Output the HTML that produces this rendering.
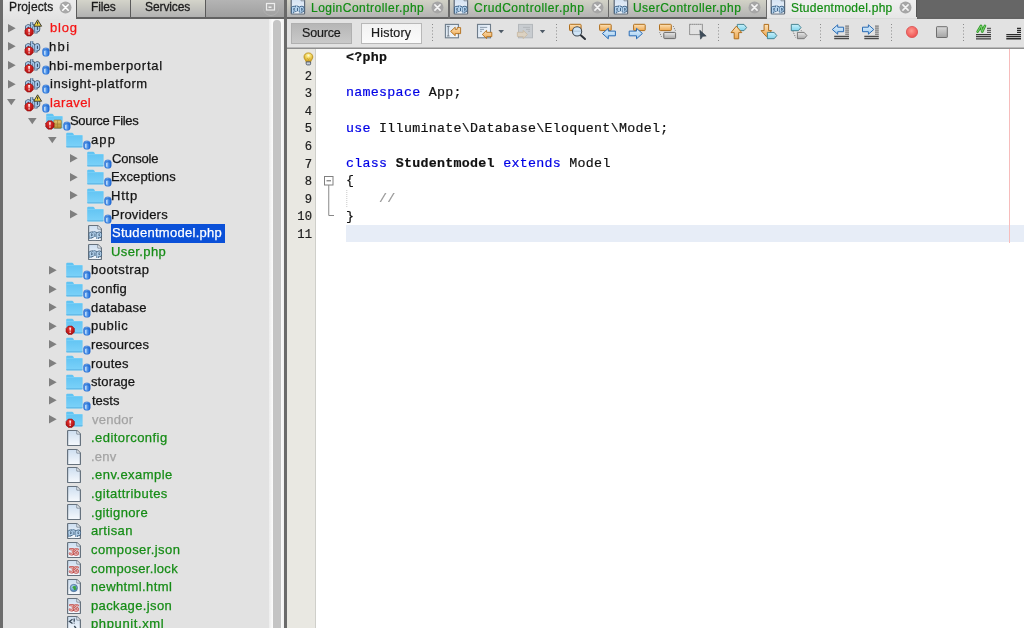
<!DOCTYPE html>
<html><head><meta charset="utf-8"><style>
html,body{margin:0;padding:0;width:1024px;height:628px;overflow:hidden;background:#e2e2e2;position:relative}
.t{position:absolute;white-space:pre;line-height:1;transform-origin:0 0;will-change:transform;font-family:"Liberation Sans",sans-serif}
.ic{position:absolute;overflow:visible;will-change:transform}
.ln{left:291px;width:21px;text-align:right;font-family:"Liberation Mono",monospace;font-size:12.2px;color:#1e1e1e;-webkit-text-stroke:0.2px #1e1e1e}
.code{position:absolute;white-space:pre;will-change:transform;transform-origin:0 0;font-family:"Liberation Mono",monospace;line-height:1;color:#111;-webkit-text-stroke:0.2px currentColor}
</style></head><body>
<svg width="0" height="0" style="position:absolute">
<defs>
<linearGradient id="gFold" x1="0" y1="0" x2="0" y2="1"><stop offset="0" stop-color="#5ec2f2"/><stop offset="1" stop-color="#7cd2f9"/></linearGradient>
<linearGradient id="gFile" x1="0" y1="0" x2="0" y2="1"><stop offset="0" stop-color="#cddef0"/><stop offset="1" stop-color="#f6f9fd"/></linearGradient>
<radialGradient id="gRed" cx="0.45" cy="0.35" r="0.7"><stop offset="0" stop-color="#ea3434"/><stop offset="1" stop-color="#a80c0c"/></radialGradient>
<linearGradient id="gBlue" x1="0" y1="0" x2="1" y2="0"><stop offset="0" stop-color="#2a78e0"/><stop offset="0.4" stop-color="#6aaaf0"/><stop offset="1" stop-color="#1a66d6"/></linearGradient>
<linearGradient id="gGold" x1="0" y1="0" x2="0" y2="1"><stop offset="0" stop-color="#e8c870"/><stop offset="1" stop-color="#b08a30"/></linearGradient>
<g id="redb"><path d="M-1.8 -4.2H1.8L4.2 -1.8V1.8L1.8 4.2H-1.8L-4.2 1.8V-1.8Z" fill="url(#gRed)" stroke="#8a0c0c" stroke-width="0.5" stroke-linejoin="round"/><path d="M-1 -2.8H1L0.5 0.6H-0.5Z" fill="#fff" opacity="0.9"/><rect x="-0.8" y="1.4" width="1.6" height="1.2" fill="#fff" opacity="0.85"/></g>
<g id="badge"><rect x="17.6" y="9.9" width="6.6" height="8.4" rx="3" ry="2.6" fill="url(#gBlue)" stroke="#1e62c8" stroke-width="0.5"/><path d="M19.8 12.6V16.8" stroke="#e8f2ff" stroke-width="1.2" opacity="0.85"/><path d="M19 12.2Q21 11.2 23.2 12.2" fill="none" stroke="#1a5cc0" stroke-width="0.7"/></g>
<g id="phpd"><path d="M1.9 6.6V14.6M6.75 3.2V12.4M6.75 8Q6.75 6.6 7.8 6.6Q8.75 6.6 8.75 8V12.4M10.9 6.6V14.6"/><ellipse cx="3.35" cy="9.3" rx="1.5" ry="2.6"/><ellipse cx="12.35" cy="9.3" rx="1.45" ry="2.6"/></g>
<g id="phpc"><path d="M2.6 8.1V14.2M6.4 6.4V12.2M6.4 9.2Q6.4 8.1 7.45 8.1Q8.5 8.1 8.5 9.2V12.2M10.2 8.1V14.2"/><ellipse cx="4.15" cy="10.15" rx="1.55" ry="2.05"/><ellipse cx="11.75" cy="10.15" rx="1.55" ry="2.05"/></g><g id="phpletters"><use href="#phpd" fill="none" stroke="#38506c" stroke-width="3"/><use href="#phpd" fill="none" stroke="#a8caec" stroke-width="1.4"/></g>
<g id="proj"><use href="#phpletters"/><use href="#redb" transform="translate(4.1 12.9)"/></g>
<g id="projw"><use href="#phpletters"/><use href="#redb" transform="translate(4.1 12.9)"/><path d="M12.6 0.8 L16.6 7.2 L8.7 7.2Z" fill="#f2d840" stroke="#2a2a2a" stroke-width="0.9" stroke-linejoin="round"/><rect x="12.1" y="2.8" width="1" height="2.6" fill="#333"/></g>
<g id="folderbody"><path d="M0.2 2.8 Q0.2 1.7 1.3 1.7 H6 Q6.8 1.7 7.3 2.5 L8 3.9 H15.6 Q16.6 3.9 16.6 4.9 V15.6 Q16.6 16.4 15.8 16.4 H1 Q0.2 16.4 0.2 15.6Z" fill="url(#gFold)"/><path d="M0.3 15.8 H16.5" stroke="#58b0e0" stroke-width="0.9"/><path d="M0.4 4.6 H16.4" stroke="#88d8fa" stroke-width="0.8" opacity="0.7"/></g>
<g id="folder"><use href="#folderbody"/></g>
<g id="folderr"><use href="#folderbody"/><use href="#redb" transform="translate(4.2 13.2)"/></g>
<g id="src"><use href="#folderbody"/><rect x="7.8" y="8.1" width="7.5" height="8.1" rx="0.8" fill="url(#gGold)" stroke="#8a6a20" stroke-width="0.6"/><path d="M11.55 8.4V16M8.2 12.1H15" stroke="#9a7a30" stroke-width="0.6"/><use href="#redb" transform="translate(3.9 13)"/></g>
<g id="filebase"><path d="M2.2 1.5H10.8L14.4 5.1V15.9Q14.4 16.5 13.8 16.5H2.2Q1.6 16.5 1.6 15.9V2.1Q1.6 1.5 2.2 1.5Z" fill="url(#gFile)" stroke="#66727e" stroke-width="1.2"/><path d="M10.8 1.8V5.1H14.1" fill="#f4f8fc" stroke="#7d8894" stroke-width="0.9"/></g>
<g id="blank"><use href="#filebase"/></g>
<g id="phpsmall" transform="translate(0.5 0.7)"><use href="#phpc" fill="none" stroke="#44627f" stroke-width="2.6"/><use href="#phpc" fill="none" stroke="#b8d6f0" stroke-width="1.1"/></g>
<g id="php"><use href="#filebase"/><use href="#phpsmall"/><path d="M4.5 15.6H9" stroke="#e4ecf4" stroke-width="0.8"/></g>
<path id="jsp" d="M4.2 8.2H6.9V11.9Q6.9 13.5 5.3 13.5Q4.1 13.5 3.8 12.5M11.8 8.4Q11.2 8 10.2 8Q8.6 8 8.6 9.5Q8.6 10.7 10.2 10.8Q11.9 10.9 11.9 12.2Q11.9 13.6 10.1 13.6Q9 13.6 8.4 13.1"/><g id="js"><use href="#filebase"/><g fill="none" stroke-linecap="round" stroke-linejoin="round"><use href="#jsp" stroke="#bc4a4a" stroke-width="2.2"/><use href="#jsp" stroke="#f8d0c8" stroke-width="0.8"/></g></g>
<radialGradient id="gGlobe" cx="0.4" cy="0.35" r="0.7"><stop offset="0" stop-color="#b8dcf4"/><stop offset="1" stop-color="#3e78b8"/></radialGradient><g id="html"><use href="#filebase"/><circle cx="7.8" cy="10" r="3.7" fill="url(#gGlobe)" stroke="#4a6888" stroke-width="0.6"/><path d="M6.2 9.2Q7.8 7.4 10.2 8.6L9.6 10.2L10.8 10.6Q9.8 12.6 7.6 12.2Q8.6 11 7.4 10.4Z" fill="#3aa43a"/></g>
<g id="xml"><use href="#filebase"/><path d="M6.5 4.3 L3.4 6.4 L6.5 8.5" fill="none" stroke="#384858" stroke-width="1.3"/><path d="M8.2 3.6V6.8M8.2 7.8V8.6" stroke="#384858" stroke-width="1.3"/><path d="M8.3 11 L10.5 14" stroke="#384858" stroke-width="1.3"/></g>
<g id="tabphp"><path d="M2 -2 H11 L14.6 1.6 V14.2 Q14.6 15 13.8 15 H2 Q1.2 15 1.2 14.2 V-2Z" fill="url(#gFile)" stroke="#5e6a78" stroke-width="1.2"/><path d="M11 -1 V1.8 H14.4" fill="#f4f8fc" stroke="#7d8894" stroke-width="0.9"/><g><use href="#phpc" fill="none" stroke="#3f6488" stroke-width="2.6"/><use href="#phpc" fill="none" stroke="#b8d6f0" stroke-width="1.1"/></g><path d="M4.5 13.6H9.5" stroke="#e4ecf4" stroke-width="0.9"/></g>
</defs></svg>

<div style="position:absolute;left:0px;top:0px;width:3px;height:628px;background:#6c6c6c"></div><div style="position:absolute;left:3px;top:0px;width:281px;height:17px;background:linear-gradient(#b4b4b4,#9f9f9f)"></div><div style="position:absolute;left:3px;top:17px;width:281px;height:2px;background:#626262"></div><div style="position:absolute;left:3px;top:0px;width:73px;height:19px;background:linear-gradient(#ececec,#e3e3e3)"></div><div style="position:absolute;left:76px;top:0px;width:54px;height:17px;background:linear-gradient(#d4d4ca,#b2b2b2);border-left:1px solid #5a5a5a;box-sizing:border-box"></div><div style="position:absolute;left:130px;top:0px;width:76px;height:17px;background:linear-gradient(#d4d4ca,#b2b2b2);border-left:1px solid #5a5a5a;border-right:1px solid #5a5a5a;box-sizing:border-box"></div><div class="t" style="left:8.84px;top:1.24px;font-size:12px;color:#1c1c1c;font-weight:normal;letter-spacing:0.137px;font-family:'Liberation Sans', sans-serif;-webkit-text-stroke:0.3px #1c1c1c">Projects</div><div class="t" style="left:90.84px;top:1.44px;font-size:12px;color:#1c1c1c;font-weight:normal;letter-spacing:-0.160px;font-family:'Liberation Sans', sans-serif;-webkit-text-stroke:0.3px #1c1c1c">Files</div><div class="t" style="left:144.96px;top:1.44px;font-size:12px;color:#1c1c1c;font-weight:normal;letter-spacing:-0.094px;font-family:'Liberation Sans', sans-serif;-webkit-text-stroke:0.3px #1c1c1c">Services</div><svg style="position:absolute;left:59px;top:1px;" width="13" height="13" viewBox="0 0 13 13"><circle cx="6.5" cy="6.5" r="6" fill="#a9a9a9"/><path d="M3.8 3.8L9.2 9.2M9.2 3.8L3.8 9.2" stroke="#fff" stroke-width="1.6" stroke-linecap="round"/></svg><svg style="position:absolute;left:262px;top:-1px;" width="18" height="18" viewBox="0 0 18 18"><circle cx="9" cy="8.5" r="8" fill="none" stroke="#b0b0b0" stroke-width="1"/><rect x="4.5" y="4.5" width="8" height="6.5" fill="none" stroke="#ededed" stroke-width="1.2"/><rect x="6.5" y="7.5" width="3" height="1.5" fill="#ededed"/></svg><div style="position:absolute;left:3px;top:19px;width:266px;height:609px;background:#e2e2e2"></div><div style="position:absolute;left:269px;top:19px;width:15px;height:609px;background:linear-gradient(90deg,#ededed,#fbfbfb 22%,#f6f6f6 50%,#fbfbfb 80%,#f0f0f0)"></div><div style="position:absolute;left:273px;top:20px;width:8px;height:608px;background:#c4c4c4;border-radius:4px 4px 0 0"></div><div style="position:absolute;left:284px;top:0px;width:3px;height:628px;background:#6a6a6a"></div><svg style="position:absolute;left:7.6px;top:23.700000000000003px;" width="9" height="10" viewBox="0 0 9 10"><path d="M0 0L7.7 4.3L0 8.6Z" fill="#7f7f7f"/></svg><svg class="ic" style="left:24.90px;top:19.10px" width="26" height="19" viewBox="0 0 26 19"><use href="#projw"/></svg><div class="t" style="left:49.55px;top:21.30px;font-size:13px;color:#f51414;font-weight:normal;letter-spacing:0.840px;font-family:'Liberation Sans', sans-serif;-webkit-text-stroke:0.25px #f51414">blog</div><svg style="position:absolute;left:7.6px;top:42.330000000000005px;" width="9" height="10" viewBox="0 0 9 10"><path d="M0 0L7.7 4.3L0 8.6Z" fill="#7f7f7f"/></svg><svg class="ic" style="left:24.90px;top:37.73px" width="26" height="19" viewBox="0 0 26 19"><use href="#proj"/><use href="#badge"/></svg><div class="t" style="left:49.49px;top:39.93px;font-size:13px;color:#151515;font-weight:normal;letter-spacing:1.383px;font-family:'Liberation Sans', sans-serif;-webkit-text-stroke:0.25px #151515">hbi</div><svg style="position:absolute;left:7.6px;top:60.96px;" width="9" height="10" viewBox="0 0 9 10"><path d="M0 0L7.7 4.3L0 8.6Z" fill="#7f7f7f"/></svg><svg class="ic" style="left:24.90px;top:56.36px" width="26" height="19" viewBox="0 0 26 19"><use href="#proj"/><use href="#badge"/></svg><div class="t" style="left:49.49px;top:58.56px;font-size:13px;color:#151515;font-weight:normal;letter-spacing:0.753px;font-family:'Liberation Sans', sans-serif;-webkit-text-stroke:0.25px #151515">hbi-memberportal</div><svg style="position:absolute;left:7.6px;top:79.59px;" width="9" height="10" viewBox="0 0 9 10"><path d="M0 0L7.7 4.3L0 8.6Z" fill="#7f7f7f"/></svg><svg class="ic" style="left:24.90px;top:74.99px" width="26" height="19" viewBox="0 0 26 19"><use href="#proj"/><use href="#badge"/></svg><div class="t" style="left:49.55px;top:77.19px;font-size:13px;color:#151515;font-weight:normal;letter-spacing:0.551px;font-family:'Liberation Sans', sans-serif;-webkit-text-stroke:0.25px #151515">insight-platform</div><svg style="position:absolute;left:7.0px;top:99.42px;" width="10" height="7" viewBox="0 0 10 7"><path d="M0 0L8.6 0L4.3 6.2Z" fill="#7f7f7f"/></svg><svg class="ic" style="left:24.90px;top:93.62px" width="26" height="19" viewBox="0 0 26 19"><use href="#projw"/><use href="#badge"/></svg><div class="t" style="left:49.55px;top:95.82px;font-size:13px;color:#f51414;font-weight:normal;letter-spacing:0.401px;font-family:'Liberation Sans', sans-serif;-webkit-text-stroke:0.25px #f51414">laravel</div><svg style="position:absolute;left:27.65px;top:118.05px;" width="10" height="7" viewBox="0 0 10 7"><path d="M0 0L8.6 0L4.3 6.2Z" fill="#7f7f7f"/></svg><svg class="ic" style="left:45.55px;top:112.25px" width="26" height="19" viewBox="0 0 26 19"><use href="#src"/><use href="#badge"/></svg><div class="t" style="left:70.47px;top:114.45px;font-size:13px;color:#151515;font-weight:normal;letter-spacing:-0.317px;font-family:'Liberation Sans', sans-serif;-webkit-text-stroke:0.25px #151515">Source Files</div><svg style="position:absolute;left:48.3px;top:136.68px;" width="10" height="7" viewBox="0 0 10 7"><path d="M0 0L8.6 0L4.3 6.2Z" fill="#7f7f7f"/></svg><svg class="ic" style="left:66.20px;top:130.88px" width="26" height="19" viewBox="0 0 26 19"><use href="#folder"/><use href="#badge"/></svg><div class="t" style="left:91.18px;top:133.08px;font-size:13px;color:#151515;font-weight:normal;letter-spacing:1.098px;font-family:'Liberation Sans', sans-serif;-webkit-text-stroke:0.25px #151515">app</div><svg style="position:absolute;left:69.55px;top:154.10999999999999px;" width="9" height="10" viewBox="0 0 9 10"><path d="M0 0L7.7 4.3L0 8.6Z" fill="#7f7f7f"/></svg><svg class="ic" style="left:86.85px;top:149.51px" width="26" height="19" viewBox="0 0 26 19"><use href="#folder"/><use href="#badge"/></svg><div class="t" style="left:111.70px;top:151.71px;font-size:13px;color:#151515;font-weight:normal;letter-spacing:-0.204px;font-family:'Liberation Sans', sans-serif;-webkit-text-stroke:0.25px #151515">Console</div><svg style="position:absolute;left:69.55px;top:172.73999999999998px;" width="9" height="10" viewBox="0 0 9 10"><path d="M0 0L7.7 4.3L0 8.6Z" fill="#7f7f7f"/></svg><svg class="ic" style="left:86.85px;top:168.14px" width="26" height="19" viewBox="0 0 26 19"><use href="#folder"/><use href="#badge"/></svg><div class="t" style="left:111.31px;top:170.34px;font-size:13px;color:#151515;font-weight:normal;letter-spacing:0.119px;font-family:'Liberation Sans', sans-serif;-webkit-text-stroke:0.25px #151515">Exceptions</div><svg style="position:absolute;left:69.55px;top:191.36999999999998px;" width="9" height="10" viewBox="0 0 9 10"><path d="M0 0L7.7 4.3L0 8.6Z" fill="#7f7f7f"/></svg><svg class="ic" style="left:86.85px;top:186.77px" width="26" height="19" viewBox="0 0 26 19"><use href="#folder"/><use href="#badge"/></svg><div class="t" style="left:111.31px;top:188.97px;font-size:13px;color:#151515;font-weight:normal;letter-spacing:0.785px;font-family:'Liberation Sans', sans-serif;-webkit-text-stroke:0.25px #151515">Http</div><svg style="position:absolute;left:69.55px;top:209.99999999999997px;" width="9" height="10" viewBox="0 0 9 10"><path d="M0 0L7.7 4.3L0 8.6Z" fill="#7f7f7f"/></svg><svg class="ic" style="left:86.85px;top:205.40px" width="26" height="19" viewBox="0 0 26 19"><use href="#folder"/><use href="#badge"/></svg><div class="t" style="left:111.31px;top:207.60px;font-size:13px;color:#151515;font-weight:normal;letter-spacing:0.215px;font-family:'Liberation Sans', sans-serif;-webkit-text-stroke:0.25px #151515">Providers</div><div style="position:absolute;left:111px;top:224px;width:114px;height:18.5px;background:#0a50d8"></div><svg class="ic" style="left:86.85px;top:224.03px" width="26" height="19" viewBox="0 0 26 19"><use href="#php"/></svg><div class="t" style="left:111.77px;top:226.23px;font-size:13px;color:#ffffff;font-weight:normal;letter-spacing:0.284px;font-family:'Liberation Sans', sans-serif;-webkit-text-stroke:0.25px #ffffff">Studentmodel.php</div><svg class="ic" style="left:86.85px;top:242.66px" width="26" height="19" viewBox="0 0 26 19"><use href="#php"/></svg><div class="t" style="left:111.38px;top:244.86px;font-size:13px;color:#168c16;font-weight:normal;letter-spacing:0.392px;font-family:'Liberation Sans', sans-serif;-webkit-text-stroke:0.25px #168c16">User.php</div><svg style="position:absolute;left:48.9px;top:265.89000000000004px;" width="9" height="10" viewBox="0 0 9 10"><path d="M0 0L7.7 4.3L0 8.6Z" fill="#7f7f7f"/></svg><svg class="ic" style="left:66.20px;top:261.29px" width="26" height="19" viewBox="0 0 26 19"><use href="#folder"/><use href="#badge"/></svg><div class="t" style="left:90.85px;top:263.49px;font-size:13px;color:#151515;font-weight:normal;letter-spacing:0.469px;font-family:'Liberation Sans', sans-serif;-webkit-text-stroke:0.25px #151515">bootstrap</div><svg style="position:absolute;left:48.9px;top:284.52000000000004px;" width="9" height="10" viewBox="0 0 9 10"><path d="M0 0L7.7 4.3L0 8.6Z" fill="#7f7f7f"/></svg><svg class="ic" style="left:66.20px;top:279.92px" width="26" height="19" viewBox="0 0 26 19"><use href="#folder"/><use href="#badge"/></svg><div class="t" style="left:91.18px;top:282.12px;font-size:13px;color:#151515;font-weight:normal;letter-spacing:0.224px;font-family:'Liberation Sans', sans-serif;-webkit-text-stroke:0.25px #151515">config</div><svg style="position:absolute;left:48.9px;top:303.15000000000003px;" width="9" height="10" viewBox="0 0 9 10"><path d="M0 0L7.7 4.3L0 8.6Z" fill="#7f7f7f"/></svg><svg class="ic" style="left:66.20px;top:298.55px" width="26" height="19" viewBox="0 0 26 19"><use href="#folder"/><use href="#badge"/></svg><div class="t" style="left:91.18px;top:300.75px;font-size:13px;color:#151515;font-weight:normal;letter-spacing:0.287px;font-family:'Liberation Sans', sans-serif;-webkit-text-stroke:0.25px #151515">database</div><svg style="position:absolute;left:48.9px;top:321.78000000000003px;" width="9" height="10" viewBox="0 0 9 10"><path d="M0 0L7.7 4.3L0 8.6Z" fill="#7f7f7f"/></svg><svg class="ic" style="left:66.20px;top:317.18px" width="26" height="19" viewBox="0 0 26 19"><use href="#folderr"/><use href="#badge"/></svg><div class="t" style="left:90.85px;top:319.38px;font-size:13px;color:#151515;font-weight:normal;letter-spacing:0.535px;font-family:'Liberation Sans', sans-serif;-webkit-text-stroke:0.25px #151515">public</div><svg style="position:absolute;left:48.9px;top:340.41px;" width="9" height="10" viewBox="0 0 9 10"><path d="M0 0L7.7 4.3L0 8.6Z" fill="#7f7f7f"/></svg><svg class="ic" style="left:66.20px;top:335.81px" width="26" height="19" viewBox="0 0 26 19"><use href="#folder"/><use href="#badge"/></svg><div class="t" style="left:90.85px;top:338.01px;font-size:13px;color:#151515;font-weight:normal;letter-spacing:0.104px;font-family:'Liberation Sans', sans-serif;-webkit-text-stroke:0.25px #151515">resources</div><svg style="position:absolute;left:48.9px;top:359.04px;" width="9" height="10" viewBox="0 0 9 10"><path d="M0 0L7.7 4.3L0 8.6Z" fill="#7f7f7f"/></svg><svg class="ic" style="left:66.20px;top:354.44px" width="26" height="19" viewBox="0 0 26 19"><use href="#folder"/><use href="#badge"/></svg><div class="t" style="left:90.85px;top:356.64px;font-size:13px;color:#151515;font-weight:normal;letter-spacing:0.292px;font-family:'Liberation Sans', sans-serif;-webkit-text-stroke:0.25px #151515">routes</div><svg style="position:absolute;left:48.9px;top:377.67px;" width="9" height="10" viewBox="0 0 9 10"><path d="M0 0L7.7 4.3L0 8.6Z" fill="#7f7f7f"/></svg><svg class="ic" style="left:66.20px;top:373.07px" width="26" height="19" viewBox="0 0 26 19"><use href="#folder"/><use href="#badge"/></svg><div class="t" style="left:91.31px;top:375.27px;font-size:13px;color:#151515;font-weight:normal;letter-spacing:0.120px;font-family:'Liberation Sans', sans-serif;-webkit-text-stroke:0.25px #151515">storage</div><svg style="position:absolute;left:48.9px;top:396.3px;" width="9" height="10" viewBox="0 0 9 10"><path d="M0 0L7.7 4.3L0 8.6Z" fill="#7f7f7f"/></svg><svg class="ic" style="left:66.20px;top:391.70px" width="26" height="19" viewBox="0 0 26 19"><use href="#folder"/><use href="#badge"/></svg><div class="t" style="left:91.50px;top:393.90px;font-size:13px;color:#151515;font-weight:normal;letter-spacing:0.005px;font-family:'Liberation Sans', sans-serif;-webkit-text-stroke:0.25px #151515">tests</div><svg style="position:absolute;left:48.9px;top:414.93px;" width="9" height="10" viewBox="0 0 9 10"><path d="M0 0L7.7 4.3L0 8.6Z" fill="#7f7f7f"/></svg><svg class="ic" style="left:66.20px;top:410.33px" width="26" height="19" viewBox="0 0 26 19"><use href="#folderr"/></svg><div class="t" style="left:91.63px;top:412.53px;font-size:13px;color:#a3a3a3;font-weight:normal;letter-spacing:0.289px;font-family:'Liberation Sans', sans-serif;-webkit-text-stroke:0.25px #a3a3a3">vendor</div><svg class="ic" style="left:66.20px;top:428.96px" width="26" height="19" viewBox="0 0 26 19"><use href="#blank"/></svg><div class="t" style="left:90.53px;top:431.16px;font-size:13px;color:#168c16;font-weight:normal;letter-spacing:0.444px;font-family:'Liberation Sans', sans-serif;-webkit-text-stroke:0.25px #168c16">.editorconfig</div><svg class="ic" style="left:66.20px;top:447.59px" width="26" height="19" viewBox="0 0 26 19"><use href="#blank"/></svg><div class="t" style="left:90.53px;top:449.79px;font-size:13px;color:#a3a3a3;font-weight:normal;letter-spacing:0.255px;font-family:'Liberation Sans', sans-serif;-webkit-text-stroke:0.25px #a3a3a3">.env</div><svg class="ic" style="left:66.20px;top:466.22px" width="26" height="19" viewBox="0 0 26 19"><use href="#blank"/></svg><div class="t" style="left:90.53px;top:468.42px;font-size:13px;color:#168c16;font-weight:normal;letter-spacing:0.444px;font-family:'Liberation Sans', sans-serif;-webkit-text-stroke:0.25px #168c16">.env.example</div><svg class="ic" style="left:66.20px;top:484.85px" width="26" height="19" viewBox="0 0 26 19"><use href="#blank"/></svg><div class="t" style="left:90.53px;top:487.05px;font-size:13px;color:#168c16;font-weight:normal;letter-spacing:0.426px;font-family:'Liberation Sans', sans-serif;-webkit-text-stroke:0.25px #168c16">.gitattributes</div><svg class="ic" style="left:66.20px;top:503.48px" width="26" height="19" viewBox="0 0 26 19"><use href="#blank"/></svg><div class="t" style="left:90.53px;top:505.68px;font-size:13px;color:#168c16;font-weight:normal;letter-spacing:0.362px;font-family:'Liberation Sans', sans-serif;-webkit-text-stroke:0.25px #168c16">.gitignore</div><svg class="ic" style="left:66.20px;top:522.11px" width="26" height="19" viewBox="0 0 26 19"><use href="#php"/></svg><div class="t" style="left:91.18px;top:524.31px;font-size:13px;color:#168c16;font-weight:normal;letter-spacing:0.394px;font-family:'Liberation Sans', sans-serif;-webkit-text-stroke:0.25px #168c16">artisan</div><svg class="ic" style="left:66.20px;top:540.74px" width="26" height="19" viewBox="0 0 26 19"><use href="#js"/></svg><div class="t" style="left:91.18px;top:542.94px;font-size:13px;color:#168c16;font-weight:normal;letter-spacing:0.423px;font-family:'Liberation Sans', sans-serif;-webkit-text-stroke:0.25px #168c16">composer.json</div><svg class="ic" style="left:66.20px;top:559.37px" width="26" height="19" viewBox="0 0 26 19"><use href="#js"/></svg><div class="t" style="left:91.18px;top:561.57px;font-size:13px;color:#168c16;font-weight:normal;letter-spacing:0.296px;font-family:'Liberation Sans', sans-serif;-webkit-text-stroke:0.25px #168c16">composer.lock</div><svg class="ic" style="left:66.20px;top:578.00px" width="26" height="19" viewBox="0 0 26 19"><use href="#html"/></svg><div class="t" style="left:90.85px;top:580.20px;font-size:13px;color:#168c16;font-weight:normal;letter-spacing:0.384px;font-family:'Liberation Sans', sans-serif;-webkit-text-stroke:0.25px #168c16">newhtml.html</div><svg class="ic" style="left:66.20px;top:596.63px" width="26" height="19" viewBox="0 0 26 19"><use href="#js"/></svg><div class="t" style="left:90.85px;top:598.83px;font-size:13px;color:#168c16;font-weight:normal;letter-spacing:0.384px;font-family:'Liberation Sans', sans-serif;-webkit-text-stroke:0.25px #168c16">package.json</div><svg class="ic" style="left:66.20px;top:615.26px" width="26" height="19" viewBox="0 0 26 19"><use href="#xml"/></svg><div class="t" style="left:90.85px;top:617.46px;font-size:13px;color:#168c16;font-weight:normal;letter-spacing:0.616px;font-family:'Liberation Sans', sans-serif;-webkit-text-stroke:0.25px #168c16">phpunit.xml</div><div style="position:absolute;left:287px;top:0px;width:737px;height:17px;background:#666666"></div><div style="position:absolute;left:287px;top:17px;width:737px;height:2px;background:#636363"></div><div style="position:absolute;left:287px;top:0px;width:161px;height:17px;background:linear-gradient(#d2d2c6,#b3b3b3)"></div><div style="position:absolute;left:448px;top:0px;width:2px;height:19px;background:#6a6a6a"></div><svg class="ic" style="left:290.00px;top:-1px" width="16" height="17" viewBox="0 0 16 17"><use href="#tabphp"/></svg><div class="t" style="left:310.64px;top:1.64px;font-size:12px;color:#128c12;font-weight:normal;letter-spacing:0.483px;font-family:'Liberation Sans', sans-serif;-webkit-text-stroke:0.2px #128c12">LoginController.php</div><svg style="position:absolute;left:430.7px;top:0.5px;" width="13" height="13" viewBox="0 0 13 13"><circle cx="6.5" cy="6.5" r="6" fill="#a6a6a6"/><path d="M3.9 3.9L9.1 9.1M9.1 3.9L3.9 9.1" stroke="#f4f4f4" stroke-width="1.6" stroke-linecap="round"/></svg><div style="position:absolute;left:450px;top:0px;width:158px;height:17px;background:linear-gradient(#d2d2c6,#b3b3b3)"></div><div style="position:absolute;left:608px;top:0px;width:2px;height:19px;background:#6a6a6a"></div><svg class="ic" style="left:453.10px;top:-1px" width="16" height="17" viewBox="0 0 16 17"><use href="#tabphp"/></svg><div class="t" style="left:473.50px;top:1.64px;font-size:12px;color:#128c12;font-weight:normal;letter-spacing:0.538px;font-family:'Liberation Sans', sans-serif;-webkit-text-stroke:0.2px #128c12">CrudController.php</div><svg style="position:absolute;left:590.5px;top:0.5px;" width="13" height="13" viewBox="0 0 13 13"><circle cx="6.5" cy="6.5" r="6" fill="#a6a6a6"/><path d="M3.9 3.9L9.1 9.1M9.1 3.9L3.9 9.1" stroke="#f4f4f4" stroke-width="1.6" stroke-linecap="round"/></svg><div style="position:absolute;left:609px;top:0px;width:157px;height:17px;background:linear-gradient(#d2d2c6,#b3b3b3)"></div><div style="position:absolute;left:766px;top:0px;width:2px;height:19px;background:#6a6a6a"></div><svg class="ic" style="left:612.60px;top:-1px" width="16" height="17" viewBox="0 0 16 17"><use href="#tabphp"/></svg><div class="t" style="left:633.10px;top:1.64px;font-size:12px;color:#128c12;font-weight:normal;letter-spacing:0.456px;font-family:'Liberation Sans', sans-serif;-webkit-text-stroke:0.2px #128c12">UserController.php</div><svg style="position:absolute;left:748.0px;top:0.5px;" width="13" height="13" viewBox="0 0 13 13"><circle cx="6.5" cy="6.5" r="6" fill="#a6a6a6"/><path d="M3.9 3.9L9.1 9.1M9.1 3.9L3.9 9.1" stroke="#f4f4f4" stroke-width="1.6" stroke-linecap="round"/></svg><div style="position:absolute;left:767px;top:0px;width:150px;height:18px;background:linear-gradient(#f0f0f0,#e6e6e6)"></div><div style="position:absolute;left:767px;top:18px;width:150px;height:1px;background:#dadada"></div><div style="position:absolute;left:916px;top:0px;width:1px;height:17px;background:#555"></div><svg class="ic" style="left:770px;top:-1px" width="16" height="17" viewBox="0 0 16 17"><use href="#tabphp"/></svg><div class="t" style="left:790.66px;top:1.64px;font-size:12px;color:#128c12;font-weight:normal;letter-spacing:0.256px;font-family:'Liberation Sans', sans-serif;-webkit-text-stroke:0.2px #128c12">Studentmodel.php</div><svg style="position:absolute;left:899.3px;top:0.5px;" width="13" height="13" viewBox="0 0 13 13"><circle cx="6.5" cy="6.5" r="6" fill="#a6a6a6"/><path d="M3.9 3.9L9.1 9.1M9.1 3.9L3.9 9.1" stroke="#f4f4f4" stroke-width="1.6" stroke-linecap="round"/></svg><div style="position:absolute;left:287px;top:19px;width:737px;height:28px;background:#e2e2e2"></div><div style="position:absolute;left:287px;top:47px;width:737px;height:1px;background:#b8b8b8"></div><div style="position:absolute;left:287px;top:48px;width:737px;height:1px;background:#8f8f8f"></div><div style="position:absolute;left:291px;top:23px;width:61px;height:21px;background:linear-gradient(#b6b6b6,#c9c9c9);border:1px solid #b0b0b0;box-sizing:border-box"></div><div style="position:absolute;left:361px;top:23px;width:61px;height:20.5px;background:linear-gradient(#f2f2f2,#fbfbfb);border:1px solid #b8b8b8;box-sizing:border-box"></div><div class="t" style="left:302.44px;top:26.92px;font-size:12.5px;color:#1a1a1a;font-weight:normal;letter-spacing:-0.188px;font-family:'Liberation Sans', sans-serif;-webkit-text-stroke:0.2px #1a1a1a">Source</div><div class="t" style="left:370.70px;top:26.92px;font-size:12.5px;color:#1a1a1a;font-weight:normal;letter-spacing:0.204px;font-family:'Liberation Sans', sans-serif;-webkit-text-stroke:0.2px #1a1a1a">History</div><svg class="ic" style="left:431px;top:23px" width="3" height="19" viewBox="0 0 3 19"><rect x="1" y="1.0" width="1" height="1" fill="#8a8a8a"/><rect x="1" y="4.2" width="1" height="1" fill="#8a8a8a"/><rect x="1" y="7.4" width="1" height="1" fill="#8a8a8a"/><rect x="1" y="10.6" width="1" height="1" fill="#8a8a8a"/><rect x="1" y="13.8" width="1" height="1" fill="#8a8a8a"/><rect x="1" y="17.0" width="1" height="1" fill="#8a8a8a"/></svg><svg class="ic" style="left:555.4px;top:23px" width="3" height="19" viewBox="0 0 3 19"><rect x="1" y="1.0" width="1" height="1" fill="#8a8a8a"/><rect x="1" y="4.2" width="1" height="1" fill="#8a8a8a"/><rect x="1" y="7.4" width="1" height="1" fill="#8a8a8a"/><rect x="1" y="10.6" width="1" height="1" fill="#8a8a8a"/><rect x="1" y="13.8" width="1" height="1" fill="#8a8a8a"/><rect x="1" y="17.0" width="1" height="1" fill="#8a8a8a"/></svg><svg class="ic" style="left:717px;top:23px" width="3" height="19" viewBox="0 0 3 19"><rect x="1" y="1.0" width="1" height="1" fill="#8a8a8a"/><rect x="1" y="4.2" width="1" height="1" fill="#8a8a8a"/><rect x="1" y="7.4" width="1" height="1" fill="#8a8a8a"/><rect x="1" y="10.6" width="1" height="1" fill="#8a8a8a"/><rect x="1" y="13.8" width="1" height="1" fill="#8a8a8a"/><rect x="1" y="17.0" width="1" height="1" fill="#8a8a8a"/></svg><svg class="ic" style="left:818.7px;top:23px" width="3" height="19" viewBox="0 0 3 19"><rect x="1" y="1.0" width="1" height="1" fill="#8a8a8a"/><rect x="1" y="4.2" width="1" height="1" fill="#8a8a8a"/><rect x="1" y="7.4" width="1" height="1" fill="#8a8a8a"/><rect x="1" y="10.6" width="1" height="1" fill="#8a8a8a"/><rect x="1" y="13.8" width="1" height="1" fill="#8a8a8a"/><rect x="1" y="17.0" width="1" height="1" fill="#8a8a8a"/></svg><svg class="ic" style="left:890.3px;top:23px" width="3" height="19" viewBox="0 0 3 19"><rect x="1" y="1.0" width="1" height="1" fill="#8a8a8a"/><rect x="1" y="4.2" width="1" height="1" fill="#8a8a8a"/><rect x="1" y="7.4" width="1" height="1" fill="#8a8a8a"/><rect x="1" y="10.6" width="1" height="1" fill="#8a8a8a"/><rect x="1" y="13.8" width="1" height="1" fill="#8a8a8a"/><rect x="1" y="17.0" width="1" height="1" fill="#8a8a8a"/></svg><svg class="ic" style="left:961.7px;top:23px" width="3" height="19" viewBox="0 0 3 19"><rect x="1" y="1.0" width="1" height="1" fill="#8a8a8a"/><rect x="1" y="4.2" width="1" height="1" fill="#8a8a8a"/><rect x="1" y="7.4" width="1" height="1" fill="#8a8a8a"/><rect x="1" y="10.6" width="1" height="1" fill="#8a8a8a"/><rect x="1" y="13.8" width="1" height="1" fill="#8a8a8a"/><rect x="1" y="17.0" width="1" height="1" fill="#8a8a8a"/></svg><div style="position:absolute;left:287px;top:49px;width:28px;height:579px;background:#e9e8e2"></div><div style="position:absolute;left:315px;top:49px;width:1px;height:579px;background:#cfcfca"></div><div style="position:absolute;left:316px;top:49px;width:708px;height:579px;background:#ffffff"></div><div style="position:absolute;left:346px;top:224.6px;width:678px;height:17.7px;background:#e7edf7"></div><div style="position:absolute;left:1009px;top:49px;width:1.2px;height:193.5px;background:#f7bcbc"></div><div class="t ln" style="top:70.55px">2</div><div class="t ln" style="top:88.15px">3</div><div class="t ln" style="top:105.75px">4</div><div class="t ln" style="top:123.35px">5</div><div class="t ln" style="top:140.95px">6</div><div class="t ln" style="top:158.55px">7</div><div class="t ln" style="top:176.15px">8</div><div class="t ln" style="top:193.75px">9</div><div class="t ln" style="top:211.35px">10</div><div class="t ln" style="top:228.95px">11</div><svg style="position:absolute;left:303px;top:52px;" width="11" height="14" viewBox="0 0 11 14"><defs><radialGradient id="bulb" cx="0.5" cy="0.3" r="0.65"><stop offset="0" stop-color="#fffbe0"/><stop offset="0.35" stop-color="#f6e070"/><stop offset="1" stop-color="#d0a020"/></radialGradient></defs><path d="M5.4 0.9C8.2 0.9 9.8 2.6 9.8 5C9.8 6.9 8.2 8 7.9 9.6L2.9 9.6C2.6 8 1 6.9 1 5C1 2.6 2.6 0.9 5.4 0.9Z" fill="url(#bulb)" stroke="#b88a10" stroke-width="0.8"/><path d="M4 6L5.4 7.4L6.8 6M5.4 7.4V9.4" fill="none" stroke="#c89a20" stroke-width="0.6"/><path d="M3.2 9.9H7.6V11.8Q7.6 12.9 6.5 12.9H4.3Q3.2 12.9 3.2 11.8Z" fill="#c8d0dc" stroke="#56606e" stroke-width="1"/></svg><svg style="position:absolute;left:323px;top:175px;" width="12" height="42" viewBox="0 0 12 42"><rect x="1.5" y="1.5" width="8.5" height="8.5" fill="#fff" stroke="#808080" stroke-width="1"/><path d="M3.5 5.8H8" stroke="#606060" stroke-width="1"/><path d="M5.75 10V40.5H11" fill="none" stroke="#888" stroke-width="1"/></svg><svg class="ic" style="left:346px;top:190px" width="2" height="18" viewBox="0 0 2 18"><rect x="0.3" y="0" width="1" height="1" fill="#c8c8c8"/><rect x="0.3" y="2" width="1" height="1" fill="#c8c8c8"/><rect x="0.3" y="4" width="1" height="1" fill="#c8c8c8"/><rect x="0.3" y="6" width="1" height="1" fill="#c8c8c8"/><rect x="0.3" y="8" width="1" height="1" fill="#c8c8c8"/><rect x="0.3" y="10" width="1" height="1" fill="#c8c8c8"/><rect x="0.3" y="12" width="1" height="1" fill="#c8c8c8"/><rect x="0.3" y="14" width="1" height="1" fill="#c8c8c8"/><rect x="0.3" y="16" width="1" height="1" fill="#c8c8c8"/></svg><div class="code" style="left:345.8px;top:51.11px;font-size:13.3px;letter-spacing:0.290px"><span style="font-weight:bold">&lt;?php</span></div><div class="code" style="left:345.8px;top:86.31px;font-size:13.3px;letter-spacing:0.290px"><span style="color:#0000e6">namespace</span><span style=""> App;</span></div><div class="code" style="left:345.8px;top:121.51px;font-size:13.3px;letter-spacing:0.290px"><span style="color:#0000e6">use</span><span style=""> Illuminate\Database\Eloquent\Model;</span></div><div class="code" style="left:345.8px;top:156.71px;font-size:13.3px;letter-spacing:0.290px"><span style="color:#0000e6">class</span><span style=""> </span><span style="font-weight:bold">Studentmodel</span><span style=""> </span><span style="color:#0000e6">extends</span><span style=""> Model</span></div><div class="code" style="left:345.8px;top:174.31px;font-size:13.3px;letter-spacing:0.290px"><span style="">{</span></div><div class="code" style="left:345.8px;top:191.91px;font-size:13.3px;letter-spacing:0.290px"><span style="">    </span><span style="color:#969696">//</span></div><div class="code" style="left:345.8px;top:209.51px;font-size:13.3px;letter-spacing:0.290px"><span style="">}</span></div>
<svg style="position:absolute;left:0;top:0;will-change:transform" width="1024" height="50" viewBox="0 0 1024 50">
<defs>
<linearGradient id="tOr" x1="0" y1="0" x2="0" y2="1"><stop offset="0" stop-color="#fde2b8"/><stop offset="1" stop-color="#eea850"/></linearGradient>
<linearGradient id="tBl" x1="0" y1="0" x2="0" y2="1"><stop offset="0" stop-color="#e4f2fc"/><stop offset="1" stop-color="#9ccaf0"/></linearGradient>
<linearGradient id="tCy" x1="0" y1="0" x2="0" y2="1"><stop offset="0" stop-color="#c8f0fa"/><stop offset="1" stop-color="#80d4ec"/></linearGradient>
<linearGradient id="tGr" x1="0" y1="0" x2="0" y2="1"><stop offset="0" stop-color="#e8e8e8"/><stop offset="1" stop-color="#a8a8a8"/></linearGradient>
<linearGradient id="tBox" x1="0" y1="0" x2="1" y2="1"><stop offset="0" stop-color="#d4e2f0"/><stop offset="1" stop-color="#fafcff"/></linearGradient>
<radialGradient id="tRed" cx="0.45" cy="0.4" r="0.6"><stop offset="0" stop-color="#ff9a90"/><stop offset="1" stop-color="#ee5050"/></radialGradient>
<linearGradient id="tStop" x1="0" y1="0" x2="0" y2="1"><stop offset="0" stop-color="#d8d8d8"/><stop offset="1" stop-color="#a4a4a4"/></linearGradient>
</defs>
<!-- 1 last edit -->
<rect x="445.4" y="24.4" width="13" height="13.4" fill="url(#tBox)" stroke="#6e7c8a" stroke-width="1.1"/>
<path d="M446.9 26.4H449.6M448.25 26.4V36M446.9 36H449.6" stroke="#6a7480" stroke-width="0.9" fill="none"/>
<path d="M450.6 31.4L455.2 27.2V29.4H457.2V27.6H460.6V33.6H455.2V35.8Z" fill="url(#tOr)" stroke="#b06e1c" stroke-width="0.9" stroke-linejoin="round"/>
<!-- 2 prev -->
<rect x="477.5" y="24.4" width="13" height="13.4" fill="url(#tBox)" stroke="#6e7c8a" stroke-width="1.1"/>
<path d="M480 27.4H487.2M480 29.4H484M480 31.3H481.8" stroke="#8696a6" stroke-width="0.9"/>
<path d="M482.3 34.5L486.6 30.3V32.3H491.8V36.6H486.6V38.6Z" fill="url(#tOr)" stroke="#b06e1c" stroke-width="0.9" stroke-linejoin="round"/>
<path d="M498.3 30H504L501.15 33.3Z" fill="#4e5a66"/>
<!-- 3 next disabled -->
<rect x="518.5" y="24.4" width="14" height="13.4" fill="#c8ccd0" stroke="#b4b8bc" stroke-width="1"/>
<path d="M523 27.4H530M526 29.4H530M528 31.3H530" stroke="#b0b4b8" stroke-width="0.9"/>
<path d="M527.4 34.5L523.2 30.3V32.3H517.4V36.6H523.2V38.6Z" fill="#dcd2c2" stroke="#c8baa4" stroke-width="0.9" stroke-linejoin="round"/>
<path d="M539.8 30H545.2L542.5 33.3Z" fill="#4e5a66"/>
<!-- 5 find -->
<rect x="569.5" y="24.3" width="11.6" height="6.3" rx="0.8" fill="url(#tOr)" stroke="#b06e1c" stroke-width="1"/>
<path d="M580.8 35.2L585 39" stroke="#2a2f36" stroke-width="2" stroke-linecap="round"/>
<circle cx="577.1" cy="31.4" r="4.6" fill="#cfe4f6" stroke="#3c4650" stroke-width="1.1"/>
<path d="M573 31.2H581.2" stroke="#9ab0c4" stroke-width="0.6"/>
<!-- 6 find prev -->
<rect x="599.6" y="24.3" width="11.6" height="6.3" rx="0.8" fill="url(#tOr)" stroke="#b06e1c" stroke-width="1"/>
<path d="M602.4 33.5L608.3 28.3V31.1H615.4V35.8H608.3V38.8Z" fill="url(#tBl)" stroke="#2a6cb4" stroke-width="1" stroke-linejoin="round"/>
<!-- 7 find next -->
<rect x="633.6" y="24.3" width="11.6" height="6.3" rx="0.8" fill="url(#tOr)" stroke="#b06e1c" stroke-width="1"/>
<path d="M642.4 33.5L636.5 28.3V31.1H629.2V35.8H636.5V38.8Z" fill="url(#tBl)" stroke="#2a6cb4" stroke-width="1" stroke-linejoin="round"/>
<!-- 8 toggle highlight -->
<rect x="659.5" y="24.3" width="11.8" height="6.3" rx="0.8" fill="url(#tOr)" stroke="#b06e1c" stroke-width="1"/>
<rect x="663.8" y="32.4" width="11.8" height="6.2" rx="0.8" fill="url(#tGr)" stroke="#6a6a6a" stroke-width="1"/>
<path d="M673.3 26.2L675.5 30.8M659.6 32.3L661.8 37.6" stroke="#555" stroke-width="0.8" stroke-dasharray="0.9 1.1"/>
<!-- 9 rect select -->
<rect x="689.6" y="24.3" width="12.8" height="10.3" fill="none" stroke="#3a3a3a" stroke-width="0.9" stroke-dasharray="1 1"/>
<path d="M699.8 30.2L706.2 36L702.8 36.3L700.6 39.2Z" fill="#3e4c5a" stroke="#2e3a46" stroke-width="0.6"/>
<!-- 11 prev bookmark -->
<path d="M737.3 24.4H744L746.6 27.6L744 30.6H737.3Z" fill="url(#tCy)" stroke="#3a7a8a" stroke-width="0.9" stroke-linejoin="round"/>
<path d="M736.3 26.2L741.8 32.6H738.7V38.8H734.2V32.6H731Z" fill="url(#tOr)" stroke="#b06e1c" stroke-width="1" stroke-linejoin="round"/>
<!-- 12 next bookmark -->
<path d="M764.1 24.4H768.6V30.6H771.6L766.4 36.6L761.1 30.6H764.1Z" fill="url(#tOr)" stroke="#b06e1c" stroke-width="1" stroke-linejoin="round"/>
<path d="M767.4 32.4H774.2L776.8 35.6L774.2 38.7H767.4Z" fill="url(#tCy)" stroke="#3a7a8a" stroke-width="0.9" stroke-linejoin="round"/>
<!-- 13 toggle bookmark -->
<path d="M791.3 24.4H798.3L801 27.6L798.3 30.7H791.3Z" fill="url(#tCy)" stroke="#3a7a8a" stroke-width="0.9" stroke-linejoin="round"/>
<path d="M797.4 32.4H804.2L806.9 35.6L804.2 38.7H797.4Z" fill="url(#tGr)" stroke="#707070" stroke-width="0.9" stroke-linejoin="round"/>
<path d="M793 31.4L795.6 37.4M801.2 30.4L802 31.8" stroke="#444" stroke-width="0.8" stroke-dasharray="0.9 1.1"/>
<!-- 15 shift left -->
<path d="M832.3 29.5L837.7 24.8V27.2H843.6V31.7H837.7V34.2Z" fill="url(#tBl)" stroke="#2a6cb4" stroke-width="1" stroke-linejoin="round"/>
<path d="M845.2 26.1H849M845.2 28.1H849M845.2 30.1H849M845.2 32.1H849M845.2 34.2H849" stroke="#505050" stroke-width="0.9"/>
<path d="M834.2 36.4H849M834.2 38.5H849" stroke="#4a4a4a" stroke-width="1.3"/>
<!-- 16 shift right -->
<path d="M873.8 29.5L868.4 24.8V27.2H862.5V31.7H868.4V34.2Z" fill="url(#tBl)" stroke="#2a6cb4" stroke-width="1" stroke-linejoin="round"/>
<path d="M875 26.1H878.8M875 28.1H878.8M875 30.1H878.8M875 32.1H878.8M875 34.2H878.8" stroke="#505050" stroke-width="0.9"/>
<path d="M864.3 36.4H878.8M864.3 38.5H878.8" stroke="#4a4a4a" stroke-width="1.3"/>
<!-- 18 record -->
<circle cx="912" cy="32" r="5.6" fill="url(#tRed)" stroke="#d85050" stroke-width="0.8"/>
<!-- 19 stop -->
<rect x="936.5" y="26.7" width="10.8" height="10.8" rx="0.6" fill="url(#tStop)" stroke="#6e6e6e" stroke-width="1"/>
<!-- 21 macro N -->
<path d="M977.6 31.6L981 25.8L982.2 31.6L985 25.8" fill="none" stroke="#2f9a2a" stroke-width="2.6" stroke-linecap="round" stroke-linejoin="round"/>
<path d="M977.6 31.6L981 25.8L982.2 31.6L985 25.8" fill="none" stroke="#88d878" stroke-width="0.9" stroke-linecap="round" stroke-linejoin="round"/>
<path d="M987 28.3H991M987 30.3H991M987 32.3H991" stroke="#404040" stroke-width="1"/>
<path d="M976 34.6H991M976 36.6H991M976 38.8H991" stroke="#3a3a3a" stroke-width="1.3"/>
<!-- 22 -->
<path d="M1017 28.4H1021M1017 30.4H1021M1017 32.4H1021" stroke="#2a2a2a" stroke-width="1.1"/>
<path d="M1006.3 34.6H1021M1006.3 36.6H1021M1006.3 38.8H1021" stroke="#2a2a2a" stroke-width="1.4"/>
</svg>

</body></html>
